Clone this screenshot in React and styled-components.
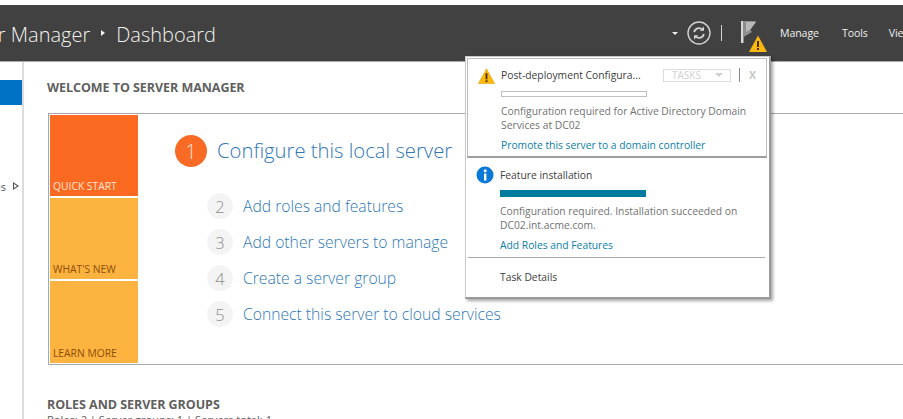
import React from 'react';
import styled, { createGlobalStyle } from 'styled-components';

const Global = createGlobalStyle`
  html, body { margin: 0; padding: 0; background: #fff; overflow: hidden; }
  body { font-family: "Open Sans", "Noto Sans", "Liberation Sans", sans-serif; }
  #root { width: 903px; height: 419px; overflow: hidden; }
`;
const Page = styled.div`
  position: relative; width: 903px; height: 419px; overflow: hidden;
  display: flex; flex-direction: column; padding-top: 5px; box-sizing: border-box; background: #fff;
`;
const Header = styled.header`
  flex: 0 0 57px; box-sizing: border-box; height: 57px; background: #414141; border-bottom: 1px solid #a9a9a9;
  display: flex; align-items: center; color: #f0f0f0;
`;
const Crumbs = styled.div`
  width: 216px; flex: none; display: flex; justify-content: flex-end; align-items: center; overflow: hidden;
  font-size: 20px; font-weight: 300; white-space: nowrap; color: #f2f2ee; padding-top: 3px;
`;
const CrumbArrow = styled.span`
  flex: none; width: 0; height: 0; margin: 0 11px 3px 11px;
  border-left: 4px solid #f2f2f2; border-top: 3.5px solid transparent; border-bottom: 3.5px solid transparent;
`;
const HeaderTools = styled.div`
  margin-left: auto; display: flex; align-items: center; height: 100%; white-space: nowrap; width: 231px; flex: none; overflow: hidden;
  & > * { flex: none; }
`;
const Caret = styled.span`
  width: 0; height: 0; margin-right: 9px;
  border-top: 3.5px solid #eee; border-left: 3px solid transparent; border-right: 3px solid transparent;
`;
const Separator = styled.span`
  width: 1px; height: 16px; background: #d4d4d4; margin: 0 19px 0 10px;
`;
const FlagWrap = styled.div`
  width: 28px; height: 36px; margin-right: 11px; margin-top: 7px;
`;
const Menu = styled.span`
  font-size: 10.6px; color: #efefef; margin-right: ${p => p.$gap}px; letter-spacing: -0.1px;
`;
const Body = styled.div`
  flex: 1; display: flex; min-height: 0;
`;
const Sidebar = styled.nav`
  width: 24px; flex: none; box-sizing: border-box; border-right: 2px solid #dcdcdc; padding-top: 18px; overflow: hidden;
`;
const SideActive = styled.div`
  height: 25px; background: #0072c6;
`;
const SideItem = styled.div`
  margin-top: 73px; height: 16px; display: flex; align-items: center; justify-content: flex-end; gap: 7px; padding-right: 3px;
  font-size: 11px; color: #555; overflow: hidden;
`;
const SideTri = styled.span`
  flex: none; width: 0; height: 0; border-left: 6px solid #555; border-top: 4px solid transparent; border-bottom: 4px solid transparent; position: relative;
  &::after { content: ""; position: absolute; left: -5px; top: -2.5px; border-left: 3.5px solid #fff; border-top: 2.5px solid transparent; border-bottom: 2.5px solid transparent; }
`;
const Main = styled.main`
  flex: 1; min-width: 0; padding: 18px 0 0 23px;
`;
const Section = styled.h2`
  margin: 0; font-size: 12.5px; line-height: 16px; font-weight: 700; color: #606060; letter-spacing: -0.05px; white-space: nowrap;
`;
const Panel = styled.section`
  margin: 17px 0 0 1px; height: 252px; box-sizing: border-box; border: 1px solid #a8a8a8; border-right: none;
  display: flex; padding: 1px 0 0 1px;
`;
const Tiles = styled.div`
  width: 88px; flex: none; display: flex; flex-direction: column; gap: 2px;
`;
const Tile = styled.div`
  flex: none; height: ${p => p.$h}px; background: ${p => p.$bg}; color: ${p => p.$fg}; box-sizing: border-box;
  font-size: 10.3px; line-height: 14px; padding: 0 0 3px 3px; display: flex; align-items: flex-end; white-space: nowrap;
`;
const Steps = styled.div`
  flex: 1; padding: 19px 0 0 37px; display: flex; flex-direction: column;
`;
const Featured = styled.div`
  display: flex; align-items: center; gap: 10px; height: 34px; margin-bottom: 25px;
`;
const BigNum = styled.span`
  width: 32px; height: 32px; border-radius: 50%; background: #f96a25; color: #fde0cf; flex: none;
  display: flex; align-items: center; justify-content: center; font-size: 20px; font-weight: 300;
`;
const BigLink = styled.span`
  font-size: 20.25px; font-weight: 300; color: #2f77b5; white-space: nowrap; position: relative; top: -1px;
`;
const Step = styled.div`
  display: flex; align-items: center; height: 26px; margin: 0 0 10px 32px; gap: 10px;
`;
const Num = styled.span`
  width: 26px; height: 26px; border-radius: 50%; background: #f4f4f4; color: #8c8c8c; flex: none;
  display: flex; align-items: center; justify-content: center; font-size: 16.5px; font-weight: 300;
`;
const StepLink = styled.span`
  font-size: 15.7px; font-weight: 300; color: #2f77b5; white-space: nowrap;
`;
const Roles = styled(Section)`margin-top: 32px;`;
const RolesLine = styled.div`
  font-size: 11.1px; line-height: 12px; margin-top: 1px; color: #606060; white-space: nowrap;
`;
const Popup = styled.aside`
  position: absolute; left: 465px; top: 56px; width: 306px; height: 243px; box-sizing: border-box;
  background: #fff; border: 1px solid #c9c9c9; border-right: 2px solid #9a9a9a; border-bottom: 2px solid #9a9a9a;
  box-shadow: 2px 2px 3px rgba(0,0,0,.35); padding: 1px; z-index: 2; display: flex; flex-direction: column;
`;
const Note = styled.div`
  position: relative; padding-left: 33px; display: flex; flex-direction: column; height: ${p => p.$h}px; box-sizing: border-box;
  padding-top: ${p => p.$top}px; border: ${p => p.$boxed ? '1px solid #bdbdbd' : 'none'}; border-bottom-width: ${p => p.$boxed ? 2 : 0}px;
  border-bottom-color: #9e9e9e; margin-right: 1px; flex: none;
  & > * { flex: none; }
`;
const NoteIcon = styled.span`
  position: absolute; left: ${p => p.$left}px; top: ${p => p.$top}px; line-height: 0;
`;
const NoteHead = styled.div`
  display: flex; align-items: center; height: 16px;
`;
const NoteTitle = styled.span`
  font-size: 10.3px; color: #3e3e3e; width: 162px; white-space: nowrap;
`;
const TaskBtn = styled.span`
  width: 68px; height: 13px; box-sizing: border-box; border: 1px solid #dcdcdc; color: #cfcfcf; font-size: 10px; display: flex; align-items: center;
  padding-left: 8px; justify-content: space-between; padding-right: 7px; margin-right: 8px; flex: none;
  &::after { content: ""; border-top: 4px solid #cfcfcf; border-left: 4px solid transparent; border-right: 4px solid transparent; }
`;
const VBar = styled.span`
  width: 1px; height: 14px; background: #888; margin-right: 9px; flex: none;
`;
const Close = styled.span`
  font-size: 10.5px; font-weight: 700; color: #c6c6c6; line-height: 1;
`;
const Progress = styled.div`
  width: 146px; height: ${p => p.$fill ? 7 : 6}px; box-sizing: border-box; margin-top: ${p => p.$top}px; border: 1px solid ${p => p.$fill ? '#007ba0' : '#c0c0c0'}; background: ${p => p.$fill ? '#007ba0' : '#fff'};
`;
const NoteText = styled.div`
  font-size: 10.3px; line-height: 14px; color: #727272; margin-top: 7px; white-space: nowrap;
`;
const NoteLink = styled.div`
  font-size: 10.3px; line-height: 14px; color: #0a7ea8; margin-top: 6px; white-space: nowrap;
`;
const Rule = styled.div`
  height: 1px; background: #a9a9a9; margin: 5px 3px 0 1px; flex: none;
`;
const TaskDetails = styled.div`
  font-size: 10.3px; line-height: 14px; color: #3e3e3e; margin: 12px 0 0 33px;
`;
const Warn = () => (
  <svg width="17" height="16" viewBox="0 0 18 17">
    <path d="M9 .8 17.4 16a.5.5 0 0 1-.4.8H1a.5.5 0 0 1-.4-.8Z" fill="#fbb80f" stroke="#d99a00" strokeWidth=".5" />
    <rect x="8" y="5.5" width="2" height="6.5" fill="#4b3200" />
    <rect x="8" y="13" width="2" height="2" fill="#4b3200" />
  </svg>
);
export default function App() {
  return (
    <Page>
      <Global />
      <Header>
        <Crumbs>Server Manager<CrumbArrow />Dashboard</Crumbs>
        <HeaderTools>
          <Caret />
          <svg width="24" height="24" viewBox="0 0 24 24" fill="none" stroke="#d2d2d2">
            <circle cx="12" cy="12" r="11" strokeWidth="1.4" />
            <path d="M7.2 11.2a4.8 4.8 0 0 1 8.2-2.6M16.8 12.8a4.8 4.8 0 0 1-8.2 2.6" strokeWidth="1.8" />
            <path d="M17 5.4v4.4h-4.4ZM7 18.6v-4.4h4.4Z" fill="#d2d2d2" stroke="none" />
          </svg>
          <Separator />
          <FlagWrap>
            <svg width="28" height="36" viewBox="0 0 28 36">
              <rect x="0" y="2" width="2.5" height="22" fill="#d8d8d8" />
              <path d="M2.5 2H15L9 10.5 11 13 2.5 18Z" fill="#8e8e8e" />
              <path d="M5 3H15L9.5 10.5 5 13Z" fill="#b9b9b9" />
              <g transform="translate(8 16)"><path d="M9 .5 18 17H0Z" fill="#fbb80f" /><rect x="8" y="6" width="2" height="6" fill="#4b3200" /><rect x="8" y="13" width="2" height="2" fill="#4b3200" /></g>
            </svg>
          </FlagWrap>
          <Menu $gap={23}>Manage</Menu>
          <Menu $gap={21}>Tools</Menu>
          <Menu $gap={0}>View</Menu>
        </HeaderTools>
      </Header>
      <Body>
        <Sidebar>
          <SideActive />
          <SideItem><span>Services</span><SideTri /></SideItem>
        </Sidebar>
        <Main>
          <Section>WELCOME TO SERVER MANAGER</Section>
          <Panel>
            <Tiles>
              <Tile $h={81} $bg="#fc6a22" $fg="#fde3d3">QUICK START</Tile>
              <Tile $h={81} $bg="#fdb33f" $fg="#8c4e08">WHAT'S NEW</Tile>
              <Tile $h={82} $bg="#fdb33f" $fg="#8c4e08">LEARN MORE</Tile>
            </Tiles>
            <Steps>
              <Featured><BigNum>1</BigNum><BigLink>Configure this local server</BigLink></Featured>
              <Step><Num>2</Num><StepLink>Add roles and features</StepLink></Step>
              <Step><Num>3</Num><StepLink>Add other servers to manage</StepLink></Step>
              <Step><Num>4</Num><StepLink>Create a server group</StepLink></Step>
              <Step><Num>5</Num><StepLink>Connect this server to cloud services</StepLink></Step>
            </Steps>
          </Panel>
          <Roles>ROLES AND SERVER GROUPS</Roles>
          <RolesLine>Roles: 2 | Server groups: 1 | Servers total: 1</RolesLine>
        </Main>
      </Body>
      <Popup>
        <Note $boxed $h={100} $top={8}>
          <NoteIcon $top={9} $left={10}><Warn /></NoteIcon>
          <NoteHead>
            <NoteTitle>Post-deployment Configura...</NoteTitle>
            <TaskBtn>TASKS</TaskBtn><VBar /><Close>X</Close>
          </NoteHead>
          <Progress $top={8} />
          <NoteText>Configuration required for Active Directory Domain<br />Services at DC02</NoteText>
          <NoteLink>Promote this server to a domain controller</NoteLink>
        </Note>
        <Note $h={94} $top={9}>
          <NoteIcon $top={8} $left={9}>
            <svg width="18" height="18" viewBox="0 0 18 18"><circle cx="9" cy="9" r="8.5" fill="#0a78d6" /><rect x="8" y="7.5" width="2.4" height="7" fill="#fff" /><circle cx="9.2" cy="4.8" r="1.5" fill="#fff" /></svg>
          </NoteIcon>
          <NoteHead><NoteTitle>Feature installation</NoteTitle></NoteHead>
          <Progress $top={7} $fill />
          <NoteText>Configuration required. Installation succeeded on<br />DC02.int.acme.com.</NoteText>
          <NoteLink>Add Roles and Features</NoteLink>
        </Note>
        <Rule />
        <TaskDetails>Task Details</TaskDetails>
      </Popup>
    </Page>
  );
}
